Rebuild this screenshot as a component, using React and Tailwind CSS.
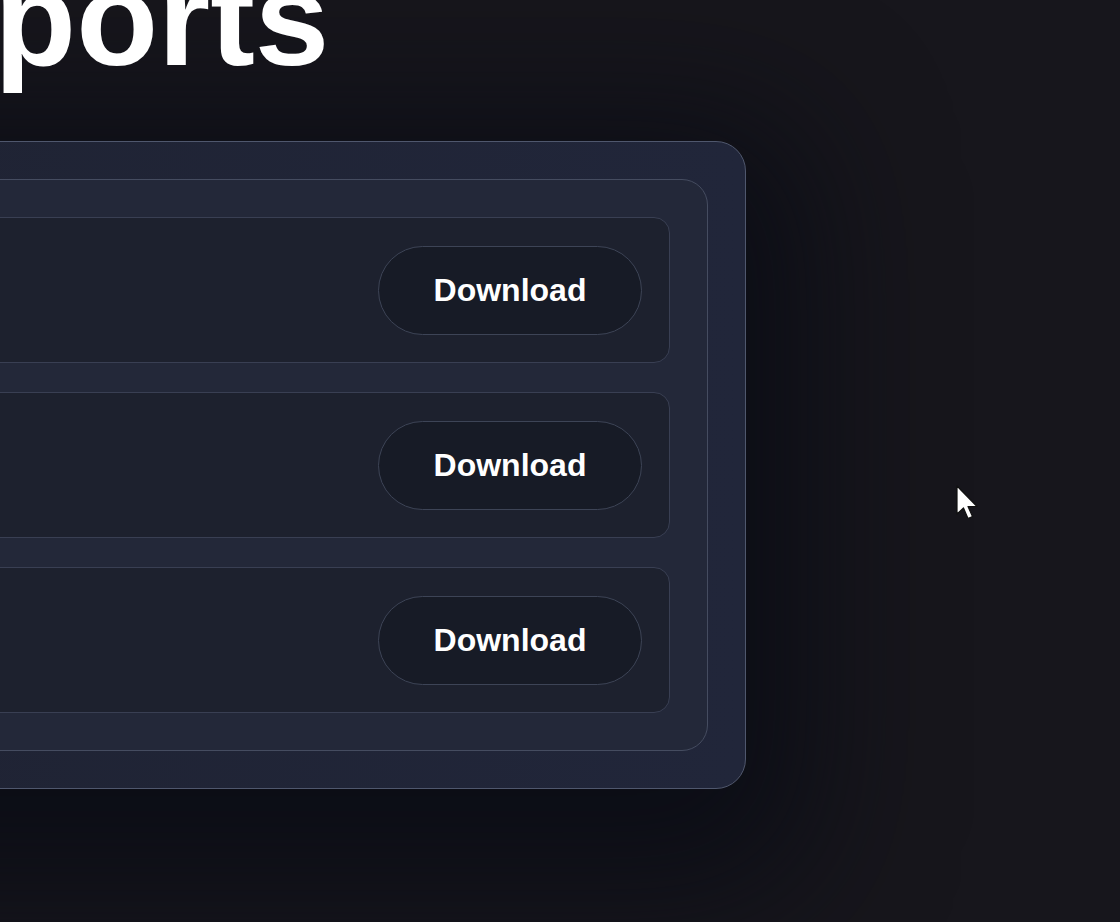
import React from 'react';

const reports = ['monthly', 'quarterly', 'annual'];

function Cursor() {
    return (
        <svg
            className="absolute left-[955px] top-[485px]"
            width="26"
            height="38"
            viewBox="0 0 26 38"
        >
            <path
                d="M2 1 L2 29 L8.5 23 L13 33.5 L17.5 31.5 L13 21.5 L22 21.5 Z"
                fill="#ffffff"
                stroke="#111"
                strokeWidth="1.2"
                strokeLinejoin="round"
            />
        </svg>
    );
}

export default function App() {
    return (
        <main
            className="relative w-[1120px] h-[922px] overflow-hidden bg-[#17161c]"
            style={{ fontFamily: '"Liberation Sans", Arial, sans-serif' }}
        >
            <div className="flex flex-col">
                <h1 className="relative z-10 mt-[-48px] ml-[-177px] text-[134px] leading-none font-bold text-[#ffffff] whitespace-nowrap">
                    Reports
                </h1>

                <section className="mt-[55px] ml-[-200px] w-[946px] rounded-[30px] border border-[#4f576d] bg-gradient-to-r from-[#1f2333] to-[#21263a] p-[37px] shadow-[0_40px_140px_60px_rgba(8,11,20,0.75)]">
                    <div className="rounded-[26px] border border-[#454c60] bg-[#232839] p-[37px] flex flex-col gap-[29px]">
                        {reports.map((id) => (
                            <div
                                key={id}
                                className="h-[146px] rounded-[16px] border border-[#393f53] bg-[#1d212e] flex items-center justify-end pr-[27px]"
                            >
                                <button className="w-[264px] h-[89px] rounded-full border border-[#3d4456] bg-[#171b26] text-white text-[32px] font-bold">
                                    Download
                                </button>
                            </div>
                        ))}
                    </div>
                </section>
            </div>
            <Cursor />
        </main>
    );
}
